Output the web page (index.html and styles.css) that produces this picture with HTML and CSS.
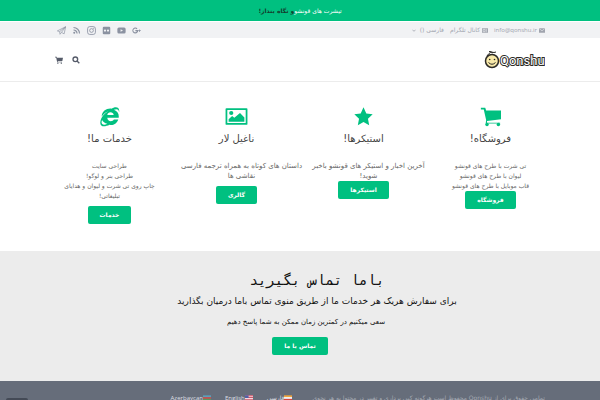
FILE: index.html
```html
<!DOCTYPE html>
<html lang="fa" dir="rtl">
<head>
    <meta charset="UTF-8">
    <meta name="viewport" content="width=device-width, initial-scale=1">
    <title>Qonshu</title>
    <link rel="stylesheet" href="styles.css">
</head>
<body>
    <div class="notice"><span>تیشرت های قونشو</span><a href="#">و نگاه بنداز!</a></div>

    <div class="topbar">
        <div class="container topbar-inner">
            <div class="contacts">
                <a href="#"><svg class="mini" viewBox="0 0 16 12"><path d="M0 0h16v12H0z"/><path d="M1 1l7 6 7-6" fill="none" stroke="#f1f2f4" stroke-width="1.5"/></svg><bdi>info@qonshu.ir</bdi></a>
                <a href="#"><svg class="mini" viewBox="0 0 16 12"><path d="M0 0h16v12H0z"/><path d="M3 3h5v6H3zM10 3h3M10 6h3M10 9h3" fill="none" stroke="#f1f2f4" stroke-width="1.5"/></svg>کانال تلگرام</a>
                <button type="button" class="lang-btn">فارسی ()<svg class="caret" viewBox="0 0 10 6"><path d="M1 1l4 4 4-4" fill="none" stroke="currentColor" stroke-width="2"/></svg></button>
            </div>
            <div class="social">
                <a href="#" aria-label="Google Plus"><svg viewBox="0 0 24 24"><path d="M9 10.500h7.500c.8 5-2.500 9.500-7.500 9.500A8 8 0 1 1 14.500 6.200l-2.200 2.200A4.900 4.900 0 1 0 13 14H9zM19 9h2v2.300h2.500v2H21v2.400h-2v-2.400h-2v-2h2z"/></svg></a>
                <a href="#" aria-label="YouTube"><svg viewBox="0 0 24 24"><path fill-rule="evenodd" d="M5 4h14q4 0 4 4v8q0 4-4 4H5q-4 0-4-4V8q0-4 4-4zm4.500 4.500v7l6.500-3.500z"/></svg></a>
                <a href="#" aria-label="Flickr"><svg viewBox="0 0 24 24"><path fill-rule="evenodd" d="M5 2h14q3 0 3 3v14q0 3-3 3H5q-3 0-3-3V5q0-3 3-3zm3 7a3 3 0 1 0 0 6 3 3 0 0 0 0-6zm8 0a3 3 0 1 0 0 6 3 3 0 0 0 0-6z"/></svg></a>
                <a href="#" aria-label="Instagram"><svg viewBox="0 0 24 24" fill="none" stroke="currentColor" stroke-width="2.200"><rect x="1.500" y="1.500" width="21" height="21" rx="6"/><circle cx="12" cy="12" r="5"/><circle cx="18" cy="6" r=".6"/></svg></a>
                <a href="#" aria-label="RSS"><svg viewBox="0 0 24 24" fill="none" stroke="currentColor" stroke-width="3"><circle cx="6" cy="18" r="1.200"/><path d="M4 10.500a9.500 9.500 0 0 1 9.500 9.500M4 4a16 16 0 0 1 16 16"/></svg></a>
                <a href="#" aria-label="Telegram"><svg viewBox="0 0 24 24" fill="none" stroke="currentColor" stroke-width="1.800" stroke-linejoin="round"><path d="M1 13L23 2l-4 19-7-4-4 5-1-7zM7 15L23 2 12 17"/></svg></a>
            </div>
        </div>
    </div>

    <header class="header">
        <div class="container header-inner">
            <a href="#" class="logo" aria-label="Qonshu">
                <svg viewBox="0 0 62 20">
                    <ellipse cx="9" cy="11" rx="6.500" ry="6.500" fill="#f8e9a9" stroke="#2c2a26" stroke-width="1.500"/>
                    <path d="M4 6q3-5 7-3.500l2-.5M10 3q-2-2-4-1.500" fill="none" stroke="#2c2a26"/>
                    <circle cx="6.700" cy="9.500" r=".8" fill="#2c2a26"/>
                    <circle cx="11.500" cy="9.500" r=".8" fill="#2c2a26"/>
                    <path d="M5.500 12.500q3.500 3.500 7 0" fill="none" stroke="#2c2a26"/>
                    <text x="17" y="15" direction="ltr" class="logo-text">Qonshu</text>
                </svg>
            </a>
            <div class="tools">
                <button type="button" aria-label="جستجو"><svg viewBox="0 0 24 24" fill="none" stroke="currentColor" stroke-width="4"><circle cx="10" cy="10" r="7"/><path d="M15 15l7 7"/></svg></button>
                <button type="button" aria-label="سبد خرید"><svg viewBox="0 0 24 24"><path d="M0 2h5l1 3h18l-2 10H8l.5 2H21v2H6.500L3.500 4.500H0z"/><circle cx="8.500" cy="21.500" r="2"/><circle cx="19" cy="21.500" r="2"/></svg></button>
            </div>
        </div>
    </header>

    <main>
        <section class="features">
            <div class="feature">
                <svg class="feature-icon" viewBox="0 0 24 24"><path d="M1 2h5l1 3h17v10L8 17v2h15v1H6.500L7 16 4.300 4H1z"/><circle cx="8" cy="21" r="2"/><circle cx="21" cy="21" r="2"/></svg>
                <h3>فروشگاه!</h3>
                <p>تی شرت با طرح های قونشو<br>لیوان با طرح های قونشو<br>قاب موبایل با طرح های قونشو</p>
                <a href="#" class="btn">فروشگاه</a>
            </div>
            <div class="feature">
                <svg class="feature-icon" viewBox="0 0 24 24"><path d="M12 1.500l3.200 7 7.300.900-5.400 5.200 1.400 7.400-6.500-3.600L5.500 22l1.400-7.400L1.500 9.400l7.300-.9z"/></svg>
                <h3>استیکرها!</h3>
                <p class="prose">آخرین اخبار و استیکر های قونشو باخبر شوید!</p>
                <a href="#" class="btn">استیکرها</a>
            </div>
            <div class="feature">
                <svg class="feature-icon wide" viewBox="0 0 28 24"><path d="M2.500 3.500h23v17h-23z" fill="none" stroke="currentColor" stroke-width="2" stroke-linejoin="round"/><circle cx="8" cy="8" r="2.400"/><path d="M5 18v-3l4-3.500 2.500 2L18 8l5 5v5z"/></svg>
                <h3>ناغیل لار</h3>
                <p class="prose spaced">داستان های کوتاه به همراه ترجمه فارسی نقاشی ها</p>
                <a href="#" class="btn">گالری</a>
            </div>
            <div class="feature">
                <svg class="feature-icon" viewBox="0 0 24 24"><path fill-rule="evenodd" d="M22.500 13.500H9.500c0 4.500 6 5 7.500 1.900h5C20 21 15.500 22.500 12 21.500c-5 2.500-11 3-10.500-3C2 13 6 8.500 10.500 6 7 7 5 9.500 3 12 3.500 6 8.500 2.500 14 3c4-2.500 10-3 9 4-.5-4-3.500-3.500-6-2.700 4.500 1.700 6 5 5.500 9.200zM9.500 10.300h7.300c-.3-4.200-7-4.200-7.300 0zM3.500 16c-2 5 1.500 6.500 6 4.300C6.500 19.500 4.500 18 3.500 16z"/></svg>
                <h3>خدمات ما!</h3>
                <p class="spaced">طراحی سایت<br>طراحی بنر و لوگو!<br>چاپ روی تی شرت و لیوان و هدایای<br>تبلیغاتی!</p>
                <a href="#" class="btn">خدمات</a>
            </div>
        </section>

        <section class="contact">
            <h2>باما تماس بگیرید</h2>
            <p class="lead">برای سفارش هریک هر خدمات ما از طریق منوی تماس باما درمیان بگذارید</p>
            <p class="note">سعی میکنیم در کمترین زمان ممکن به شما پاسخ دهیم</p>
            <a href="#" class="btn">تماس با ما</a>
        </section>
    </main>

    <footer class="footer">
        <div class="container footer-inner">
            <span class="copyright">تمامی حقوق برای از Qonshu محفوظ است هرگونه کپی برداری و تغییر در محتوا به هر نحوی</span>
            <nav class="languages">
                <a href="#"><svg class="flag" viewBox="0 0 9 6"><path fill="#f0a63c" d="M0 0h9v2H0z"/><path fill="#fff" d="M0 2h9v2H0z"/><path fill="#d8453b" d="M0 4h9v2H0z"/></svg>فارسی</a>
                <a href="#"><svg class="flag" viewBox="0 0 9 6"><path fill="#f3dadd" d="M0 0h9v6H0z"/><path fill="#d0566b" d="M0 0h9v1H0zM0 2h9v1H0zM0 4h9v1H0z"/><path fill="#5062a8" d="M0 0h4v3H0z"/></svg><bdi>English</bdi></a>
                <a href="#"><svg class="flag" viewBox="0 0 9 6"><path fill="#5b9fba" d="M0 0h9v2H0z"/><path fill="#c9524f" d="M0 2h9v2H0z"/><path fill="#559a62" d="M0 4h9v2H0z"/></svg><bdi>Azerbaycan</bdi></a>
            </nav>
        </div>
    </footer>
    <button type="button" class="corner-tab" aria-label="بالا"></button>
</body>
</html>
```
FILE: styles.css
```css
* {
    box-sizing: border-box;
}

body {
    margin: 0;
    background: #fff;
    color: #666;
    fill: currentColor;
    font-family: "DejaVu Sans", sans-serif;
    font-size: 6px;
    line-height: 10px;
}

a {
    color: inherit;
    text-decoration: none;
}

button {
    padding: 0;
    border: none;
    background: none;
    color: inherit;
    font: inherit;
    cursor: pointer;
}

svg {
    display: block;
}

h2, h3, p {
    margin: 0;
    font-weight: normal;
}

.container {
    max-width: 504px;
    margin: 0 auto;
    padding: 0 7px;
}

/* green strip */
.notice {
    display: flex;
    justify-content: center;
    align-items: center;
    height: 21px;
    background: #00c080;
    color: #fff;
}

.notice a {
    color: #143c2c;
    font-weight: bold;
}

.topbar {
    margin-top: 1px;
    background: #f1f2f4;
    color: #a0a4ae;
}

.topbar-inner,
.header-inner,
.contacts,
.contacts a,
.social,
.tools,
.languages,
.languages a {
    display: flex;
    align-items: center;
}

.topbar-inner {
    justify-content: space-between;
    height: 16px;
}

.contacts {
    gap: 6px;
}

.contacts a {
    gap: 2px;
}

.contacts bdi,
.footer bdi {
    font-family: "Open Sans", sans-serif;
}

.mini {
    width: 6px;
    height: 5px;
}

.lang-btn {
    display: flex;
    align-items: center;
    gap: 4px;
}

.caret {
    width: 4px;
    height: 3px;
}

.social {
    gap: 6px;
    padding-left: 2px;
    color: #8b92a1;
}

.social svg {
    width: 9px;
    height: 9px;
}

.header {
    border-bottom: 1px solid #ececec;
}

.header-inner {
    justify-content: space-between;
    height: 43px;
}

.logo svg {
    width: 62px;
    height: 20px;
}

.logo-text {
    fill: #fff;
    stroke: #2c2a26;
    stroke-width: 2px;
    paint-order: stroke;
    font-family: Roboto, sans-serif;
    font-size: 13px;
}

.tools {
    gap: 9px;
    color: #555b69;
}

.tools svg {
    width: 8px;
    height: 8px;
}

/* four service columns */
.features {
    display: grid;
    grid-template-columns: repeat(4, 1fr);
    gap: 4px;
    max-width: 504px;
    min-height: 169px;
    margin: 0 auto;
    padding-top: 24px;
}

.feature {
    text-align: center;
}

.feature-icon {
    width: 21px;
    height: 21px;
    margin: 0 auto 4px;
    color: #00c080;
}

.feature-icon.wide {
    width: 25px;
}

.feature h3 {
    margin-bottom: 14px;
    color: #444;
    font-size: 10px;
    line-height: 16px;
}

.feature .prose {
    margin-right: -5px;
    margin-left: 5px;
    font-size: 7px;
}

.feature .spaced {
    margin-bottom: 5px;
}

.btn {
    display: inline-block;
    padding: 4px 12px;
    border-radius: 2px;
    background: #00c080;
    color: #fff;
    font-weight: bold;
}

.contact {
    padding: 18px 0 26px;
    background: #ececec;
    color: #111;
    text-align: center;
}

.contact h2,
.contact .lead {
    padding-left: 34px;
}

.contact h2 {
    font-family: "DejaVu Sans Mono", monospace;
    font-size: 14px;
    line-height: 22px;
}

.contact .lead {
    margin-bottom: 6px;
    font-size: 9px;
    line-height: 20px;
}

.contact .note {
    margin-bottom: 10px;
    padding-left: 12px;
    font-size: 7px;
}

.footer {
    background: #666d7a;
    color: #a4a9b2;
}

.footer-inner {
    display: flex;
    gap: 20px;
    padding-top: 12px;
    padding-bottom: 12px;
    white-space: nowrap;
}

.languages {
    gap: 14px;
    color: #dddfe3;
}

.flag {
    width: 8px;
    height: 6px;
}

.corner-tab {
    position: fixed;
    bottom: 0;
    left: 6px;
    width: 22px;
    height: 2px;
    border-radius: 2px 2px 0 0;
    background: #444a56;
}
```
